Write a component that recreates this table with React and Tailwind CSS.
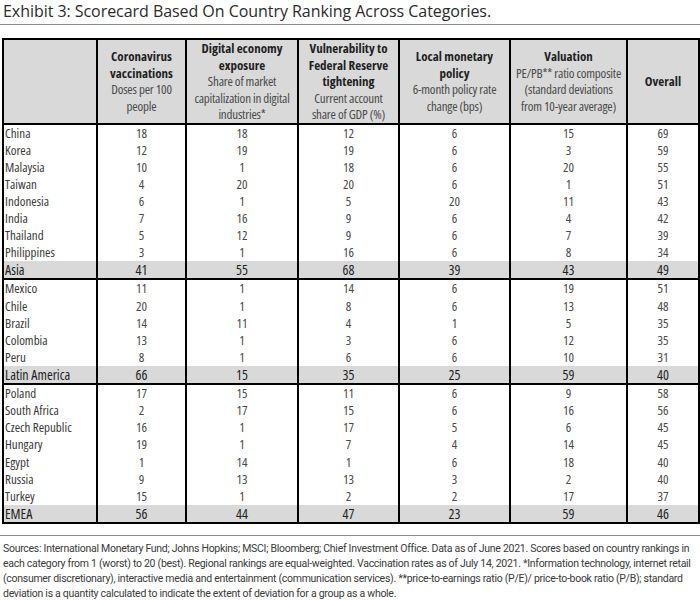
import React from "react";

const groups = [
  {
    rows: [
      ["China", 18, 18, 12, 6, 15, 69],
      ["Korea", 12, 19, 19, 6, 3, 59],
      ["Malaysia", 10, 1, 18, 6, 20, 55],
      ["Taiwan", 4, 20, 20, 6, 1, 51],
      ["Indonesia", 6, 1, 5, 20, 11, 43],
      ["India", 7, 16, 9, 6, 4, 42],
      ["Thailand", 5, 12, 9, 6, 7, 39],
      ["Philippines", 3, 1, 16, 6, 8, 34],
    ],
    total: ["Asia", 41, 55, 68, 39, 43, 49],
  },
  {
    rows: [
      ["Mexico", 11, 1, 14, 6, 19, 51],
      ["Chile", 20, 1, 8, 6, 13, 48],
      ["Brazil", 14, 11, 4, 1, 5, 35],
      ["Colombia", 13, 1, 3, 6, 12, 35],
      ["Peru", 8, 1, 6, 6, 10, 31],
    ],
    total: ["Latin America", 66, 15, 35, 25, 59, 40],
  },
  {
    rows: [
      ["Poland", 17, 15, 11, 6, 9, 58],
      ["South Africa", 2, 17, 15, 6, 16, 56],
      ["Czech Republic", 16, 1, 17, 5, 6, 45],
      ["Hungary", 19, 1, 7, 4, 14, 45],
      ["Egypt", 1, 14, 1, 6, 18, 40],
      ["Russia", 9, 13, 13, 3, 2, 40],
      ["Turkey", 15, 1, 2, 2, 17, 37],
    ],
    total: ["EMEA", 56, 44, 47, 23, 59, 46],
  },
];

// header lines broken as in the exhibit
const headers = [
  { title: ["Coronavirus", "vaccinations"], sub: ["Doses per 100", "people"] },
  { title: ["Digital economy", "exposure"], sub: ["Share of market", "capitalization in digital", "industries*"] },
  { title: ["Vulnerability to", "Federal Reserve", "tightening"], sub: ["Current account", "share of GDP (%)"] },
  { title: ["Local monetary", "policy"], sub: ["6-month policy rate", "change (bps)"] },
  { title: ["Valuation"], sub: ["PE/PB** ratio composite", "(standard deviations", "from 10-year average)"] },
  { title: ["Overall"], sub: [] },
];

const notes = [
  "Sources: International Monetary Fund; Johns Hopkins; MSCI; Bloomberg; Chief Investment Office. Data as of June 2021. Scores based on country rankings in",
  "each category from 1 (worst) to 20 (best). Regional rankings are equal-weighted. Vaccination rates as of July 14, 2021. *Information technology, internet retail",
  "(consumer discretionary), interactive media and entertainment (communication services). **price-to-earnings ratio (P/E)/ price-to-book ratio (P/B); standard",
  "deviation is a quantity calculated to indicate the extent of deviation for a group as a whole.",
];

export default function App() {
  return (
    <div className="w-[700px] h-[600px] bg-white overflow-hidden font-['Open_Sans',sans-serif]">
      {/* title */}
      <div className="px-[3px] pt-[1px] pb-[3px] border-b border-[#8a8a8a] text-[16px] leading-[20px] text-[#2b2b2b] font-stretch-100% tracking-[-0.05px]">
        Exhibit 3: Scorecard Based On Country Ranking Across Categories.
      </div>

      <div className="px-[2px] pt-[13px]">
        <table className="table-fixed border-collapse w-[696px] border-2 border-black text-[13px] text-[#4a4a4a] font-stretch-75%">
          <colgroup>
            <col className="w-[94px]" />
            <col className="w-[89px]" />
            <col className="w-[112px]" />
            <col className="w-[101px]" />
            <col className="w-[111px]" />
            <col className="w-[117px]" />
            <col className="w-[72px]" />
          </colgroup>
          <thead>
            <tr className="bg-[#d9d9d9] h-[84px] border-b-2 border-black">
              <th className="border-r-2 border-black"></th>
              {headers.map((h, i) => (
                <th
                  key={i}
                  className={`align-middle text-center p-0 text-[13px] leading-[16.5px] whitespace-nowrap ${i < 5 ? "border-r-2 border-black" : ""}`}
                >
                  {h.title.map((t) => (
                    <div key={t} className="font-bold text-[#1f1f1f]">{t}</div>
                  ))}
                  {h.sub.map((t) => (
                    <div key={t} className="font-normal text-[#4a4a4a] tracking-[-0.2px]">{t}</div>
                  ))}
                </th>
              ))}
            </tr>
          </thead>
          {groups.map((g, gi) => (
            <tbody key={gi} className="border-b-2 border-black">
              {g.rows.map((r) => (
                <tr key={r[0]} className="h-[17.15px]">
                  {r.map((c, ci) => (
                    <td
                      key={ci}
                      className={`p-0 leading-[17px] whitespace-nowrap ${ci === 0 ? "text-left pl-[1px] text-[#3a3a3a]" : "text-center"} ${ci < 6 ? "border-r-2 border-black" : ""}`}
                    >
                      {c}
                    </td>
                  ))}
                </tr>
              ))}
              <tr className="h-[17.15px] bg-[#d9d9d9] text-[#1f1f1f] text-[14px]">
                {g.total.map((c, ci) => (
                  <td
                    key={ci}
                    className={`p-0 leading-[17px] whitespace-nowrap ${ci === 0 ? "text-left pl-[1px]" : "text-center"} ${ci < 6 ? "border-r-2 border-black" : ""}`}
                  >
                    {c}
                  </td>
                ))}
              </tr>
            </tbody>
          ))}
        </table>
      </div>

      {/* footnote */}
      <div className="mt-[11px] border-t border-[#8a8a8a] pt-[5px] px-[3px] text-[10.5px] leading-[15px] text-[#3a3a3a] font-['Roboto',sans-serif] tracking-[-0.28px] whitespace-nowrap">
        {notes.map((n) => (
          <div key={n}>{n}</div>
        ))}
      </div>
    </div>
  );
}
